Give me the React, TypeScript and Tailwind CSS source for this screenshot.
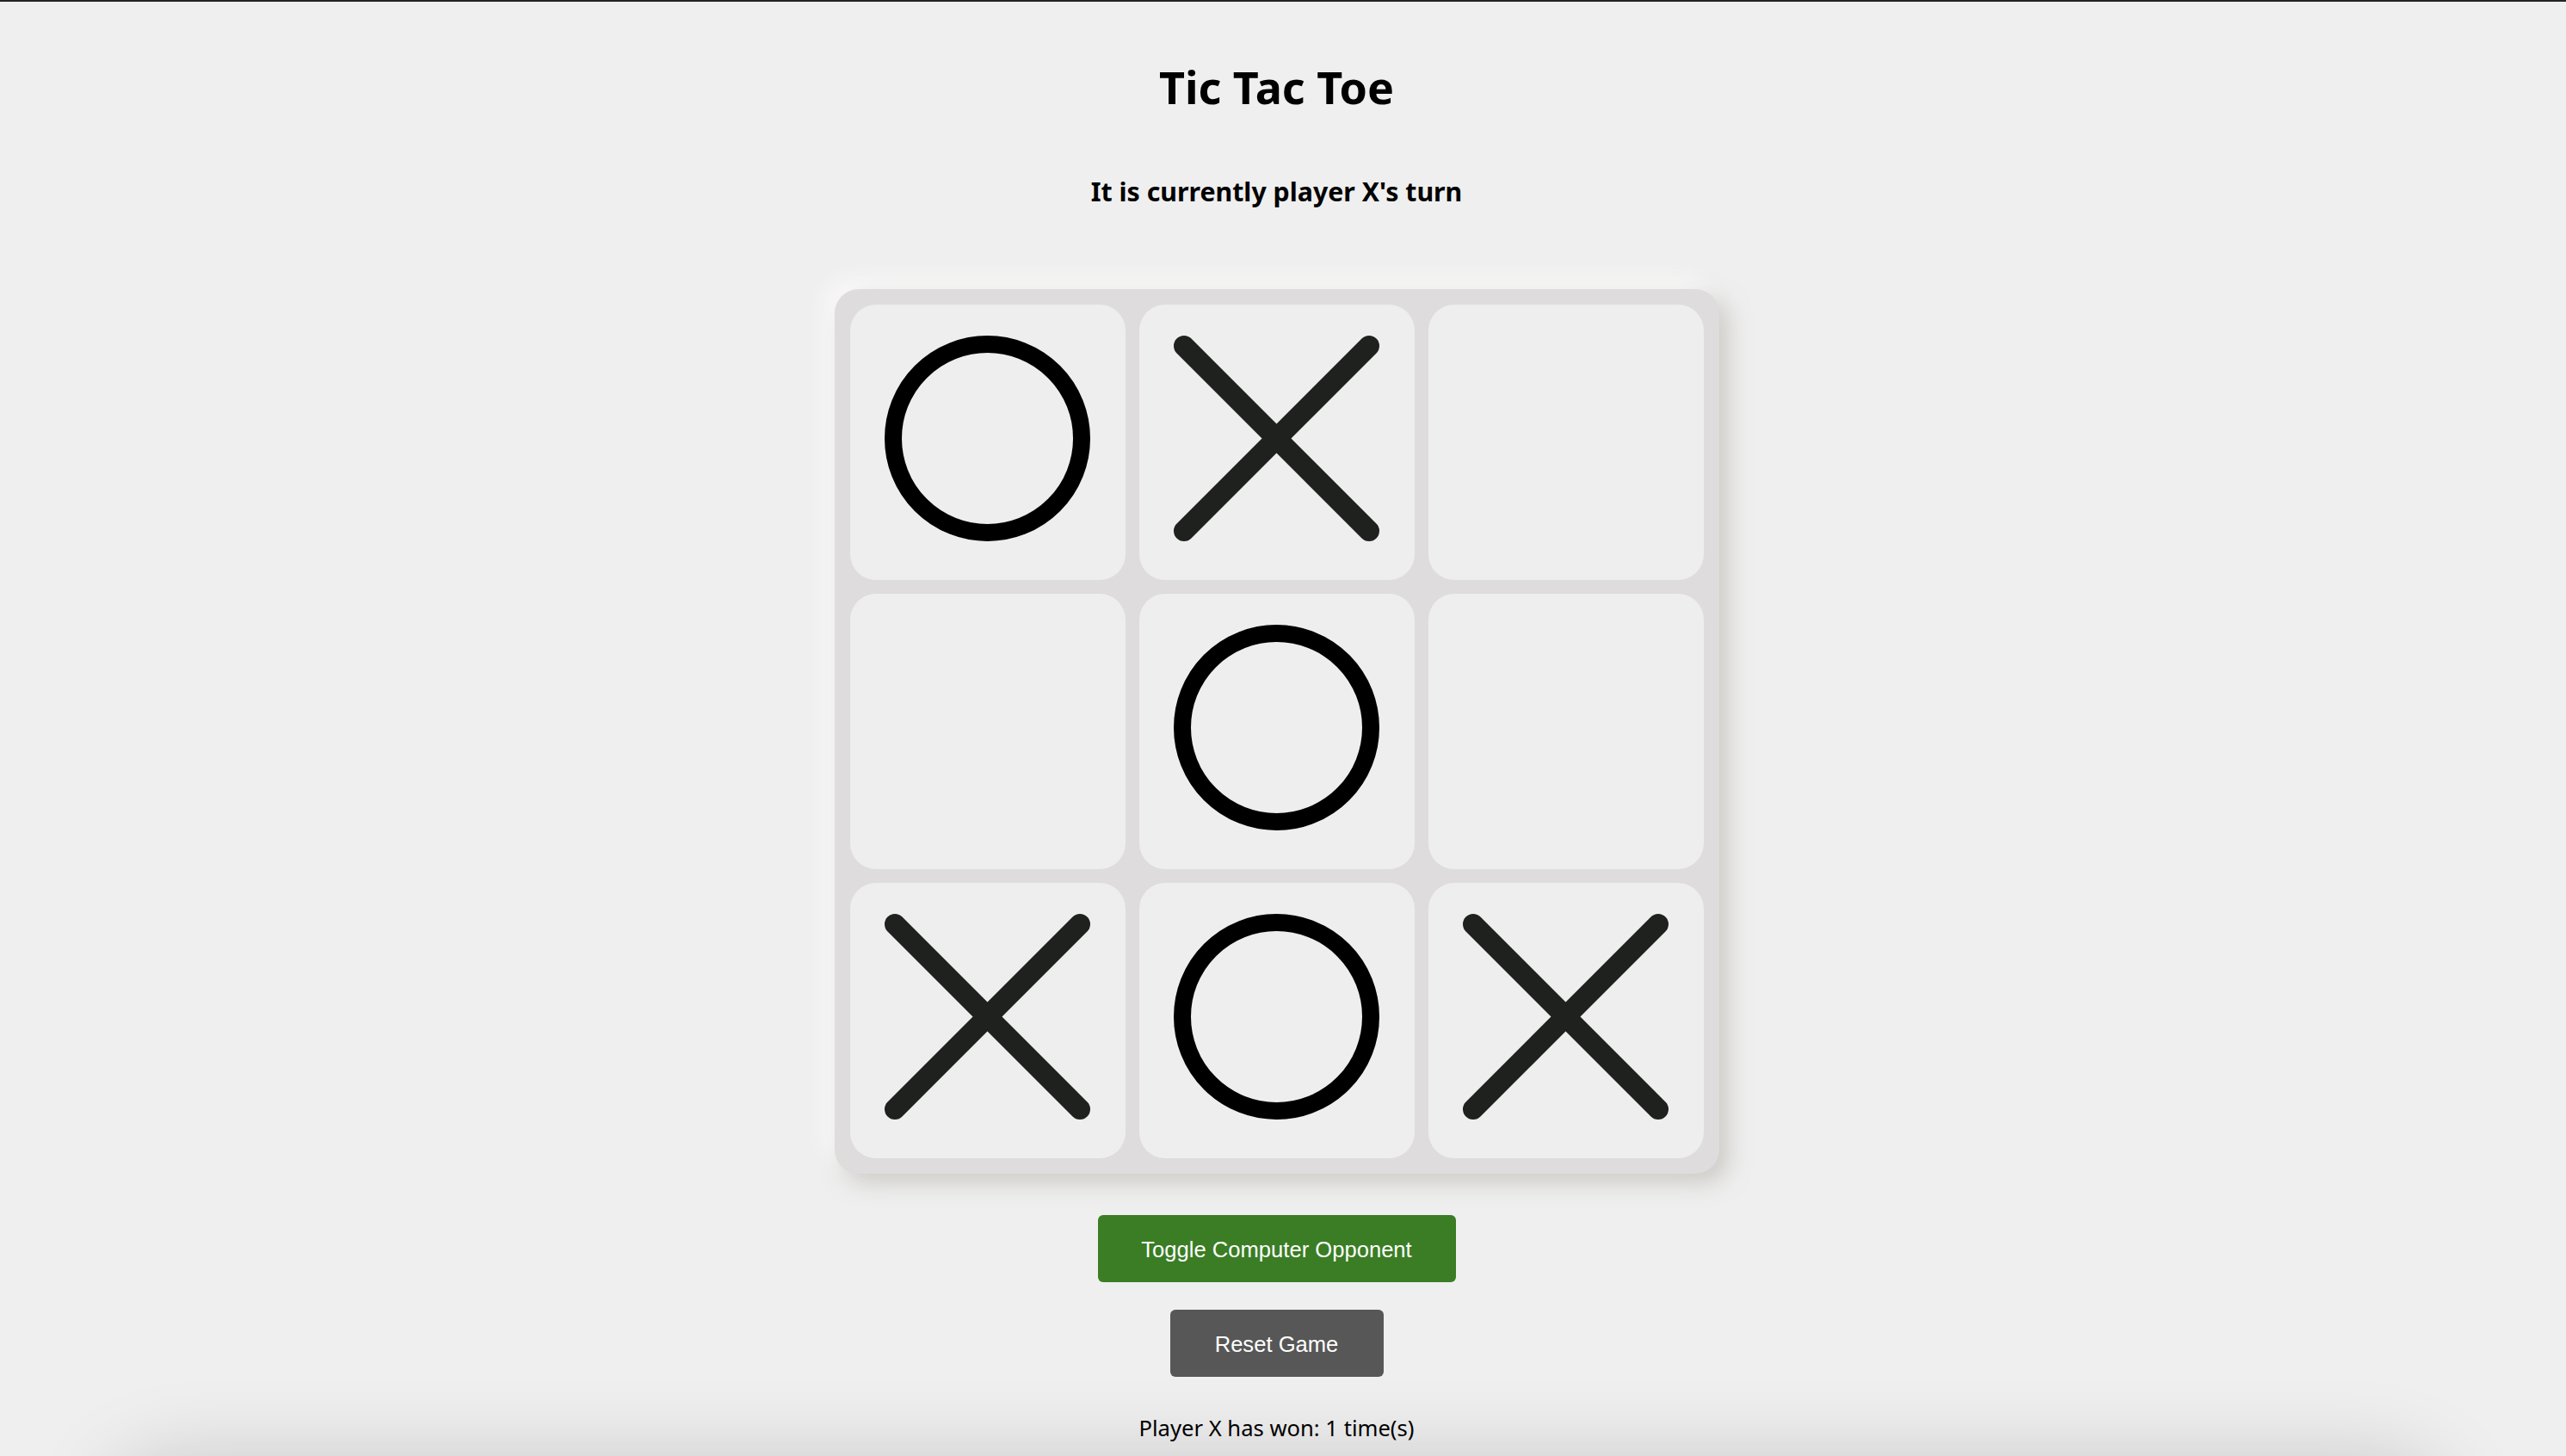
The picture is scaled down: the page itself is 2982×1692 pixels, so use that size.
import React from "react";

type Mark = "X" | "O" | null;

const board: Mark[] = ["O", "X", null, null, "O", null, "X", "O", "X"];

function OMark() {
  return (
    <svg width="320" height="320" viewBox="0 0 320 320" className="block">
      <circle cx="159.5" cy="155.5" r="109.5" fill="none" stroke="#000000" strokeWidth="20" />
    </svg>
  );
}

function XMark() {
  return (
    <svg width="320" height="320" viewBox="0 0 320 320" className="block">
      <g stroke="#1f211e" strokeWidth="24" strokeLinecap="round">
        <line x1="52" y1="48" x2="267" y2="263" />
        <line x1="267" y1="48" x2="52" y2="263" />
      </g>
    </svg>
  );
}

export default function App() {
  return (
    <div className="h-[1692px] w-full overflow-hidden bg-[#efefef] text-black [font-family:'Noto_Sans','Open_Sans',sans-serif]">
      <div className="h-[2px] w-full bg-[#232323]" />
      <div className="flex flex-col items-center pr-[15px]">
        <h1 className="mt-[73px] text-[52px] leading-none font-bold">Tic Tac Toe</h1>
        <h3 className="mt-[81px] h-[30px] text-[30.3px] leading-none font-bold">It is currently player X's turn</h3>
        <div className="mt-[98px] grid grid-cols-[320px_320px_320px] gap-[16px] rounded-[28px] bg-[#dedcdc] p-[18px] shadow-[10px_10px_26px_rgba(170,166,156,0.5),-10px_-10px_26px_rgba(255,255,255,0.85)]">
          {board.map((m, i) => (
            <div key={i} className="h-[320px] w-[320px] rounded-[30px] bg-[#eeeeee]">
              {m === "O" ? <OMark /> : m === "X" ? <XMark /> : null}
            </div>
          ))}
        </div>
        <button className="mt-[48px] flex h-[78px] w-[416px] items-center justify-center rounded-[6px] bg-[#3a7d24] pt-[3px] text-[25.6px] leading-none text-white [font-family:'Liberation_Sans',Arial,sans-serif]">
          Toggle Computer Opponent
        </button>
        <button className="mt-[32px] flex h-[78px] w-[248px] items-center justify-center rounded-[6px] bg-[#575757] pt-[3px] text-[25.6px] leading-none text-white [font-family:'Liberation_Sans',Arial,sans-serif]">
          Reset Game
        </button>
        <p className="mt-[47px] text-[25.6px] leading-none">Player X has won: 1 time(s)</p>
        <div className="mt-[27px] h-[400px] w-[2720px] rounded-[80px] bg-[#efefef] shadow-[0_0_100px_rgba(0,0,0,0.18)]" />
      </div>
    </div>
  );
}
